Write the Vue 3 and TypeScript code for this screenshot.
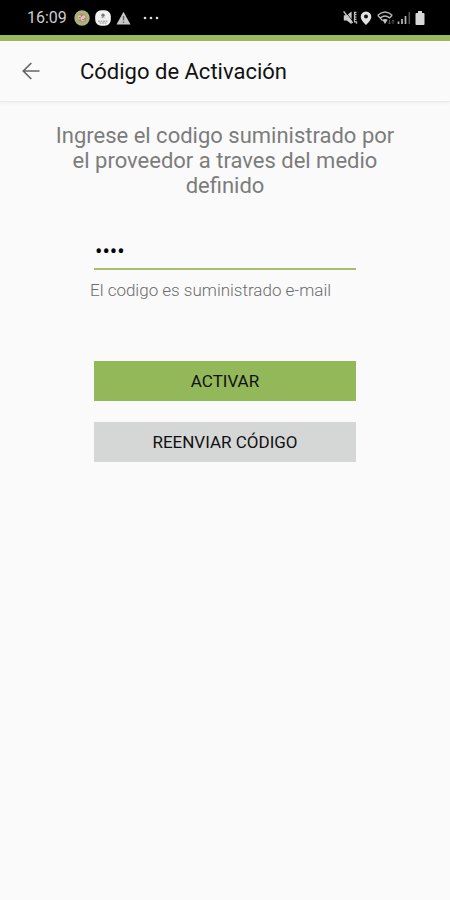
<script setup lang="ts">
import { ref } from 'vue'

const code = ref<string>('1234')
</script>

<template>
  <div class="screen">
    <div class="status-bar">
      <div class="status-group">
        <span class="clock">16:09</span>
        <svg width="16" height="16" viewBox="0 0 16 16" aria-hidden="true">
          <circle cx="8" cy="8" r="7.7" fill="#a5b876" />
          <path d="M3.4 5.3 7 3.2l4 .8 1.8 3-1 4-3.4 1.8-4-1.6z" fill="#b98b83" />
          <path d="m4 6 2-1 1.5 2L10 4.8l1.5 2.4-2 1.2 1.5 2-3.2 1-1-2.3-2.2.3z" fill="#e0c6bd" />
          <path d="m5 7.5 2 .5m1.3 1.5 2 .3M8.2 5l-.8 1.5" stroke="#a35e61" fill="none" />
        </svg>
        <svg width="16" height="16" viewBox="0 0 16 16" aria-hidden="true">
          <rect x=".2" y=".2" width="15.6" height="15.6" rx="6" fill="#f1f1f1" />
          <circle cx="8" cy="5.2" r="1.7" fill="#777" />
          <path d="M6.6 7.700h3M3 11.200h10M4.500 13h7" stroke="#999" stroke-dasharray="2 .5" fill="none" />
        </svg>
        <svg width="15" height="14" viewBox="0 0 15 14" aria-hidden="true">
          <path d="M7.500.8 14.500 13.500H.5z" fill="#c9c9c9" />
          <path d="M7.500 5v4.200M7.500 10.400v1.500" stroke="#666" stroke-width="1.400" />
        </svg>
        <svg class="more" width="18" height="4" viewBox="0 0 18 4" aria-hidden="true">
          <circle cx="3" cy="2" r="1.3" fill="#ddd" />
          <circle cx="9" cy="2" r="1.3" fill="#ddd" />
          <circle cx="15" cy="2" r="1.3" fill="#ddd" />
        </svg>
      </div>
      <div class="status-group status-right">
        <svg width="15" height="16" viewBox="0 0 15 16" aria-hidden="true">
          <path d="M.8 5.200h3L8.600 1.400v12.800L3.800 10.500h-3z" fill="#ccc" />
          <path d="m2 1.200 8.400 10.700" stroke="#000" stroke-width=".8" />
          <path d="m.6 1.400 9 11.500" stroke="#ccc" stroke-width="1.400" />
          <path d="M13.500 2.500h-2v2.200h2M11.500 4.700v2.400h2M11.500 7.100v2.300h2M11.500 9.400v2.400h2v2" stroke="#bbb" stroke-width="1.300" fill="none" />
        </svg>
        <svg width="12" height="16" viewBox="0 0 12 16" aria-hidden="true">
          <path d="M6 1.500A5.300 5.300 0 0 0 .7 6.800C.7 10.500 6 15 6 15s5.300-4.500 5.300-8.200A5.300 5.300 0 0 0 6 1.500z" fill="#e2e2e2" />
          <circle cx="6" cy="6.500" r="2" fill="#111" />
        </svg>
        <svg class="wifi" width="18" height="16" viewBox="0 0 18 16" aria-hidden="true">
          <path d="M.8 5.300Q8 -1.500 15.200 5.300M3.300 8Q8 3.800 12.700 8M.8 5.300l4.700 5.300M15.200 5.300l-3 3" stroke="#b8b8b8" stroke-width="1.400" fill="none" />
          <path d="M5.300 9.800Q8 8 10.700 9.800L8 14z" fill="#c4c4c4" />
          <path d="M12.500 10v4m-1.500-1.500 1.500 1.500 1.300-1.500M16 14v-4m-1.300 1.500L16 10l1.300 1.500" stroke="#555" fill="none" />
        </svg>
        <svg width="14" height="16" viewBox="0 0 14 16" aria-hidden="true">
          <path d="M1.500 11.500v2.500M5 9v5M8.500 6v8" stroke="#b8b8b8" stroke-width="1.700" />
          <path d="M12.300 2v12" stroke="#555" stroke-width="1.500" />
        </svg>
        <svg class="battery" width="10" height="16" viewBox="0 0 10 16" aria-hidden="true">
          <path d="M3 1h4v2h1.500q1 0 1 1v10q0 1-1 1h-7q-1 0-1-1V4q0-1 1-1H3z" fill="#d8d8d8" />
        </svg>
      </div>
    </div>

    <header class="app-bar">
      <button class="back" type="button" aria-label="Volver">
        <svg width="18" height="18" viewBox="0 0 18 18" aria-hidden="true">
          <path d="M17.500 9H1.500M9.300 1 1.300 9l8 8" fill="none" stroke="#666" stroke-width="1.700" />
        </svg>
      </button>
      <h1>Código de Activación</h1>
    </header>

    <main>
      <p class="intro">Ingrese el codigo suministrado por el proveedor a traves del medio definido</p>
      <form class="form" @submit.prevent>
        <input id="code" v-model="code" type="password" autocomplete="off" />
        <label for="code">El codigo es suministrado e-mail</label>
        <button class="action primary" type="submit">ACTIVAR</button>
        <button class="action secondary" type="button">REENVIAR CÓDIGO</button>
      </form>
    </main>
  </div>
</template>

<style>
body {
  background: #fafafa;
}
</style>

<style scoped>
.screen {
  min-height: 100vh;
  background: #fafafa;
  color: #111;
  font-family: Roboto, "Liberation Sans", sans-serif;
}

.status-bar {
  display: flex;
  justify-content: space-between;
  height: 35px;
  padding: 0 25px 0 27px;
  background: #000;
  border-bottom: 6px solid #9bb85f;
}

.status-group {
  display: flex;
  align-items: center;
  gap: 5px;
}

.clock {
  margin-right: 2px;
  color: #ccc;
  font-size: 16px;
  line-height: 20px;
}

.more {
  margin-left: 6px;
}

.status-right {
  gap: 2px;
}

.wifi {
  margin-left: 3px;
}

.battery {
  margin-left: 2px;
}

.app-bar {
  display: flex;
  align-items: center;
  height: 60px;
  padding: 0 22px;
  border-bottom: 1px solid #ececec;
  box-shadow: 0 1px 3px #0000000d;
}

.back {
  display: flex;
  padding: 0;
  border: 0;
  background: none;
}

h1 {
  margin: 2px 0 0 40px;
  font-size: 22px;
  font-weight: 400;
  line-height: 28px;
}

main {
  padding: 21px 48px;
}

.intro {
  margin: 0;
  color: #7c7c7c;
  font-size: 22px;
  line-height: 25px;
  text-align: center;
}

.form {
  display: flex;
  flex-direction: column;
  margin: 36px 46px 0;
}

input {
  box-sizing: border-box;
  width: 100%;
  height: 36px;
  padding: 0 1px;
  border: 0;
  border-bottom: 2px solid #a6bd72;
  outline: 0;
  background: none;
  color: #000;
  font: 22px Roboto, sans-serif;
}

label {
  margin: 10px 0 0 -4px;
  color: #6c6c6c;
  font-size: 17px;
  font-weight: 300;
  line-height: 20px;
  white-space: nowrap;
}

.action {
  height: 40px;
  padding: 0;
  border: 0;
  color: #111;
  font: 400 17px Roboto, sans-serif;
}

.primary {
  margin-top: 61px;
  background: #93b859;
}

.secondary {
  margin-top: 21px;
  background: #d5d7d6;
}
</style>
